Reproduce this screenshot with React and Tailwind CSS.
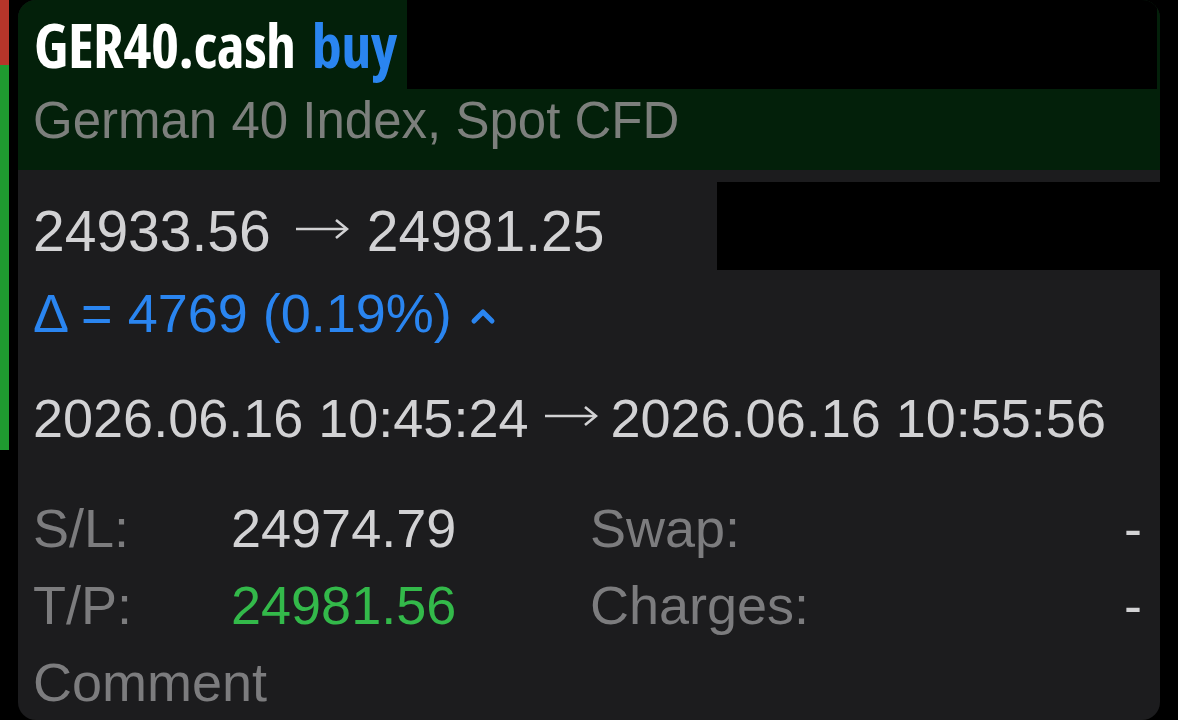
import React from 'react';

const sans = { fontFamily: '"Liberation Sans", Arial, sans-serif' };

// long thin arrow, like the iOS "→" glyph
const Arrow = ({ className }) => (
  <svg className={className} width="54" height="22" viewBox="0 0 54 22">
    <line x1="1" y1="11" x2="51" y2="11" stroke="#d2d2d4" strokeWidth="2.6" />
    <polyline points="41,2 52,11 41,20" fill="none" stroke="#d2d2d4" strokeWidth="2.6" strokeLinejoin="miter" />
  </svg>
);

const App = () => {
  return (
    <div className="w-[1178px] h-[720px] bg-black flex overflow-hidden" style={sans}>
      {/* Left side bar */}
      <div className="w-[9px] flex flex-col shrink-0">
        <div className="h-[65px] bg-[#b7352a]"></div>
        <div className="h-[385px] bg-[#1f9a30]"></div>
      </div>

      {/* Card */}
      <div className="ml-[9px] w-[1142px] h-[720px] flex flex-col rounded-[18px] overflow-hidden bg-[#1c1c1e]">
        {/* Header */}
        <div className="h-[170px] bg-[#03200a] flex flex-col">
          <div className="h-[89px] flex">
            <div
              className="pl-[16px] flex items-center gap-[16px] text-[60px] font-bold leading-none tracking-[-0.5px] [font-stretch:75%]"
              style={{ fontFamily: '"Open Sans", "DejaVu Sans Condensed", sans-serif' }}
            >
              <span className="text-white">GER40.cash</span>
              <span className="text-[#2a85f0]">buy</span>
            </div>
            <div className="ml-[10px] mr-[3px] flex-1 bg-black"></div>
          </div>
          <div className="flex-1 flex items-center pl-[15px] pb-[18px] text-[51px] leading-none text-[#7c7f7c]">
            German 40 Index, Spot CFD
          </div>
        </div>

        {/* Prices */}
        <div className="mt-[12px] h-[88px] flex">
          <div className="flex-1 flex items-center pl-[15px] pt-[10px] text-[57px] leading-none text-[#d2d2d4]">
            <span>24933.56</span>
            <Arrow className="ml-[24px] mr-[18px] mt-[-4px]" />
            <span>24981.25</span>
          </div>
          <div className="w-[443px] bg-black"></div>
        </div>

        {/* Delta */}
        <div className="h-[86px] flex items-center pl-[15px] text-[54px] leading-none text-[#2a85f0]">
          <span>Δ = 4769 (0.19%)</span>
          <svg className="ml-[18px] mt-[6px]" width="26" height="18" viewBox="0 0 26 18">
            <polyline points="4,14 13,5 22,14" fill="none" stroke="#2a85f0" strokeWidth="5" strokeLinecap="round" strokeLinejoin="round" />
          </svg>
        </div>

        {/* Dates */}
        <div className="h-[124px] flex items-center pl-[15px] text-[54px] leading-none text-[#d2d2d4]">
          <span>2026.06.16 10:45:24</span>
          <Arrow className="ml-[16px] mr-[12px] mt-[-4px]" />
          <span>2026.06.16 10:55:56</span>
        </div>

        {/* Details */}
        <div className="mt-[9px] grid grid-cols-[198px_359px_1fr_auto] auto-rows-[77px] items-center pl-[15px] pr-[18px] text-[54px] leading-none">
          <span className="text-[#7c7c7e]">S/L:</span>
          <span className="text-[#d2d2d4]">24974.79</span>
          <span className="text-[#7c7c7e]">Swap:</span>
          <span className="text-[#d2d2d4]">-</span>
          <span className="text-[#7c7c7e]">T/P:</span>
          <span className="text-[#33b94a]">24981.56</span>
          <span className="text-[#7c7c7e]">Charges:</span>
          <span className="text-[#d2d2d4]">-</span>
          <span className="text-[#7c7c7e] col-span-4">Comment</span>
        </div>
      </div>
    </div>
  );
};

export default App;
